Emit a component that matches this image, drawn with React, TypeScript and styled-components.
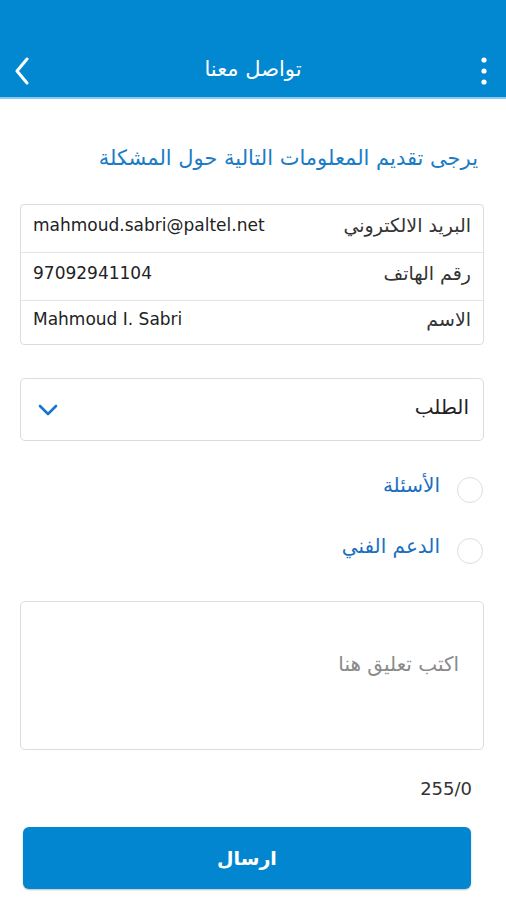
import styled, { createGlobalStyle } from 'styled-components';

const GlobalStyle = createGlobalStyle`
  html, body {
    margin: 0;
    padding: 0;
    background: #ffffff;
  }
  body {
    font-family: 'DejaVu Sans', 'Noto Sans', sans-serif;
  }
`;

const infoRows = [
  { label: 'البريد الالكتروني', value: 'mahmoud.sabri@paltel.net' },
  { label: 'رقم الهاتف', value: '97092941104' },
  { label: 'الاسم', value: 'Mahmoud I. Sabri' },
];

const options = ['الأسئلة', 'الدعم الفني'];

const App = () => {
  return (
    <>
      <GlobalStyle />
      <Page dir='rtl'>
        <Header>
          <HeaderIcon aria-label='menu'>
            <svg width='8' height='28' viewBox='0 0 8 28'>
              <circle cx='4' cy='3' r='2.6' fill='#fff' />
              <circle cx='4' cy='14' r='2.6' fill='#fff' />
              <circle cx='4' cy='25' r='2.6' fill='#fff' />
            </svg>
          </HeaderIcon>
          <HeaderTitle>تواصل معنا</HeaderTitle>
          <HeaderIcon aria-label='back'>
            <svg width='16' height='28' viewBox='0 0 16 28'>
              <path d='M13 2 L3 14 L13 26' fill='none' stroke='#fff' strokeWidth='3' strokeLinecap='round' strokeLinejoin='round' />
            </svg>
          </HeaderIcon>
        </Header>

        <Content>
          <Intro>يرجى تقديم المعلومات التالية حول المشكلة</Intro>

          <InfoCard>
            {infoRows.map((row) => (
              <InfoRow key={row.label}>
                <InfoLabel>{row.label}</InfoLabel>
                <InfoValue dir='ltr'>{row.value}</InfoValue>
              </InfoRow>
            ))}
          </InfoCard>

          <Select>
            <SelectText>الطلب</SelectText>
            <svg width='20' height='12' viewBox='0 0 20 12'>
              <path d='M2 2 L10 10 L18 2' fill='none' stroke='#1b74c5' strokeWidth='2.6' strokeLinecap='round' strokeLinejoin='round' />
            </svg>
          </Select>

          <RadioList>
            {options.map((opt) => (
              <RadioRow key={opt}>
                <RadioCircle />
                <RadioLabel>{opt}</RadioLabel>
              </RadioRow>
            ))}
          </RadioList>

          <CommentBox placeholder='اكتب تعليق هنا' />
          <Counter>255/0</Counter>
        </Content>

        <SendButton type='button'>ارسال</SendButton>
      </Page>
    </>
  );
};

export default App;

const Page = styled.div`
  width: 506px;
  min-height: 900px;
  display: flex;
  flex-direction: column;
`;

const Header = styled.div`
  height: 99px;
  background-color: #0288d1;
  border-bottom: 2px solid #8ccaf0;
  display: flex;
  align-items: flex-end;
  justify-content: space-between;
  padding: 0 12px 12px 12px;
  box-sizing: border-box;
`;

const HeaderIcon = styled.div`
  width: 20px;
  height: 28px;
  display: flex;
  align-items: center;
  justify-content: center;
`;

const HeaderTitle = styled.h1`
  margin: 0 0 2px 0;
  color: #ffffff;
  font-size: 21px;
  font-weight: normal;
  line-height: 28px;
`;

const Content = styled.div`
  display: flex;
  flex-direction: column;
  padding: 0 22px 0 20px;
  margin-top: 42px;
`;

const Intro = styled.p`
  margin: 0 6px 0 0;
  color: #1b7cc6;
  font-size: 21px;
  line-height: 34px;
`;

const InfoCard = styled.div`
  margin-top: 29px;
  border: 1px solid #dcdcdc;
  border-radius: 4px;
  display: flex;
  flex-direction: column;
`;

const InfoRow = styled.div`
  height: 47px;
  display: flex;
  align-items: center;
  justify-content: space-between;
  padding: 0 12px 0 12px;
  border-bottom: 1px solid #e2e2e2;

  &:last-child {
    border-bottom: none;
    height: 43px;
  }
`;

const InfoLabel = styled.span`
  color: #333333;
  font-size: 19px;
  margin-top: -8px;
`;

const InfoValue = styled.span`
  color: #222222;
  font-size: 17px;
  font-family: 'DejaVu Sans', sans-serif;
  margin-top: -8px;
`;

const Select = styled.div`
  margin-top: 33px;
  height: 63px;
  border: 1px solid #dcdcdc;
  border-radius: 5px;
  display: flex;
  align-items: center;
  justify-content: space-between;
  padding: 0 14px 0 17px;
  box-sizing: border-box;
`;

const SelectText = styled.span`
  color: #222222;
  font-size: 20px;
  margin-top: -6px;
`;

const RadioList = styled.div`
  margin-top: 36px;
  display: flex;
  flex-direction: column;
  gap: 35px;
  padding-right: 1px;
`;

const RadioRow = styled.label`
  display: flex;
  align-items: center;
  gap: 17px;
  height: 26px;
`;

const RadioCircle = styled.span`
  width: 24px;
  height: 24px;
  border: 1.5px solid #dedede;
  border-radius: 50%;
`;

const RadioLabel = styled.span`
  color: #1b6fc0;
  font-size: 20px;
  margin-top: -10px;
`;

const CommentBox = styled.textarea`
  margin-top: 37px;
  height: 149px;
  border: 1px solid #dcdcdc;
  border-radius: 5px;
  resize: none;
  box-sizing: border-box;
  padding: 50px 24px 0 0;
  font-family: 'DejaVu Sans', sans-serif;
  font-size: 20px;
  outline: none;

  &::placeholder {
    color: #8a8a8a;
  }
`;

const Counter = styled.div`
  margin: 28px 12px 0 0;
  color: #333333;
  font-size: 18px;
  text-align: right;
  direction: ltr;
`;

const SendButton = styled.button`
  margin: 28px 35px 0 23px;
  height: 62px;
  border: none;
  border-radius: 6px;
  background-color: #0386d0;
  color: #ffffff;
  font-family: 'DejaVu Sans', sans-serif;
  font-size: 19px;
  font-weight: bold;
  box-shadow: 0 1px 2px rgba(0, 0, 0, 0.25);
`;
